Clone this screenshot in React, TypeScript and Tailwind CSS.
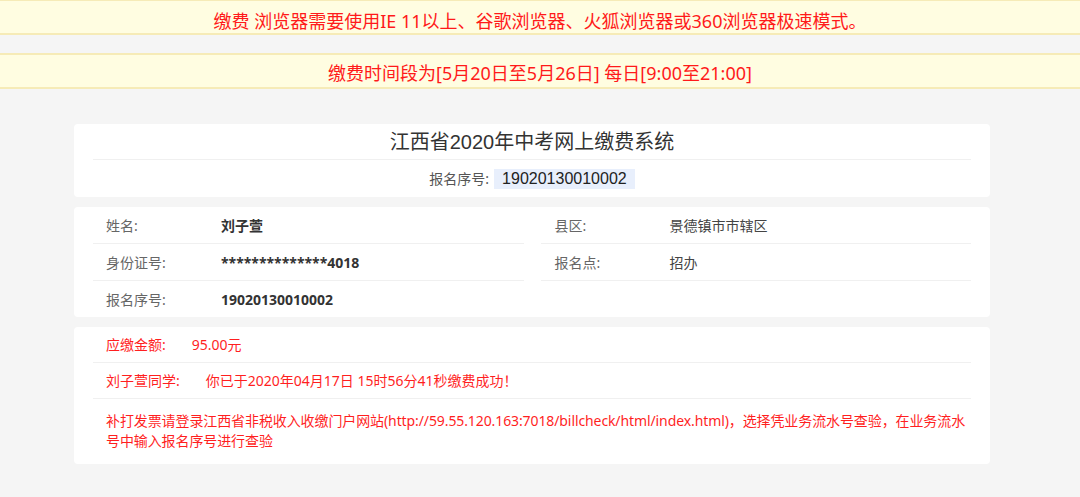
const yahei = '[font-family:"Noto_Sans","Noto_Sans_CJK_SC",sans-serif]';

function InfoRow({ label, value, last }: { label: string; value: string; last?: boolean }) {
  return (
    <div className={`flex items-center h-[37px] px-[13px] ${last ? '' : 'border-b border-[#f0f0f0]'}`}>
      <span className="w-[115px] shrink-0 text-[#666]">{label}</span>
      <span className="text-[#333] font-bold">{value}</span>
    </div>
  );
}

function SideRow({ label, value, last }: { label: string; value: string; last?: boolean }) {
  return (
    <div className={`flex items-center h-[37px] px-[14px] ${last ? '' : 'border-b border-[#f0f0f0]'}`}>
      <span className="w-[115px] shrink-0 text-[#666]">{label}</span>
      <span className="text-[#444]">{value}</span>
    </div>
  );
}

export default function App() {
  return (
    <div className={`min-h-screen bg-[#f5f5f5] text-[14px] ${yahei}`}>
      {/* Notices */}
      <div className="bg-[#fffde1] border-t border-b-2 border-[#f6ebb7] pt-[9px] pb-[1px] leading-[22px] text-center text-[18px] text-[#ff1a1a]">
        缴费 浏览器需要使用IE 11以上、谷歌浏览器、火狐浏览器或360浏览器极速模式。
      </div>
      <div className="mt-[18px] bg-[#fffde1] border-y-2 border-[#f6ebb7] pt-[7px] pb-[3px] leading-[22px] text-center text-[18px] text-[#ff1a1a]">
        缴费时间段为[5月20日至5月26日] 每日[9:00至21:00]
      </div>

      <div className="ml-[74px] w-[916px] mt-[35px] flex flex-col gap-[10px] pb-[34px]">
        {/* Title card */}
        <div className="bg-white rounded-[4px] px-[19px] h-[73px] flex flex-col">
          <div className="h-[36px] border-b border-[#f0f0f0] flex items-center justify-center text-[20px] text-[#333] [font-family:'Liberation_Sans','Noto_Sans_CJK_SC',sans-serif]">
            江西省2020年中考网上缴费系统
          </div>
          <div className="flex-1 flex items-center justify-center gap-[5px]">
            <span className="text-[#555] text-[14px]">报名序号:</span>
            <span className="bg-[#e8effc] px-[8px] leading-[20px] text-[16px] text-[#222] [font-family:'Liberation_Sans',sans-serif]">
              19020130010002
            </span>
          </div>
        </div>

        {/* Student info */}
        <div className="bg-white rounded-[4px] px-[19px] h-[110px] grid grid-cols-2 gap-x-[17px]">
          <div>
            <InfoRow label="姓名:" value="刘子萱" />
            <InfoRow label="身份证号:" value="**************4018" />
            <InfoRow label="报名序号:" value="19020130010002" last />
          </div>
          <div>
            <SideRow label="县区:" value="景德镇市市辖区" />
            <SideRow label="报名点:" value="招办" />
          </div>
        </div>

        {/* Payment result */}
        <div className="bg-white rounded-[4px] px-[19px] text-[#ff1f1f]">
          <div className="flex items-center h-[36px] px-[13px] border-b border-[#f0f0f0]">
            <span>应缴金额:</span>
            <span className="ml-[26px]">95.00元</span>
          </div>
          <div className="flex items-center h-[36px] px-[13px] border-b border-[#f0f0f0]">
            <span>刘子萱同学:</span>
            <span className="ml-[26px]">你已于2020年04月17日 15时56分41秒缴费成功！</span>
          </div>
          <div className="pl-[13px] pt-[12px] pb-[13px] leading-[20px] tracking-[-0.1px]">
            补打发票请登录江西省非税收入收缴门户网站(http://59.55.120.163:7018/billcheck/html/index.html)，选择凭业务流水号查验，在业务流水号中输入报名序号进行查验
          </div>
        </div>
      </div>
    </div>
  );
}
